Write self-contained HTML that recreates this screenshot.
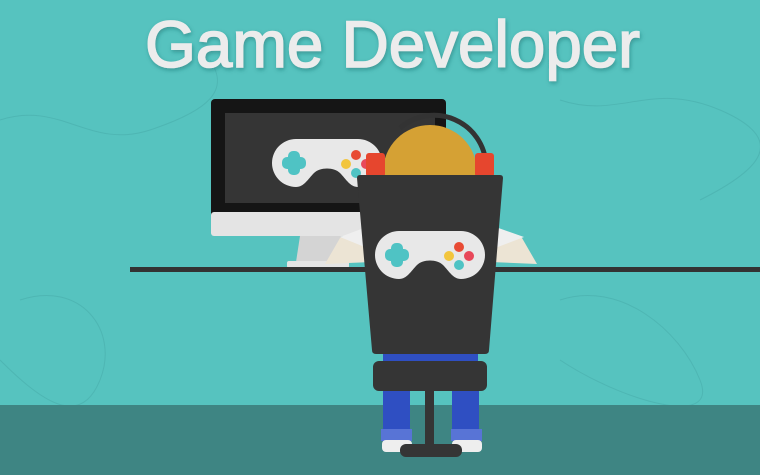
<!DOCTYPE html>
<html><head><meta charset="utf-8"><style>
html,body{margin:0;padding:0;width:760px;height:475px;overflow:hidden;background:#56c3bf}
svg{display:block}
</style></head><body>
<svg width="760" height="475" viewBox="0 0 760 475" xmlns="http://www.w3.org/2000/svg">
<defs>
<g id="pad">
<path d="M24,0 H86 A24,24 0 0 1 86,48 C78,48 74,40 68,34 C62,28 48,28 42,34 C36,40 32,48 24,48 A24,24 0 0 1 24,0 Z" fill="#e8e8e8"/>
<rect x="16" y="12" width="12" height="24" rx="5" fill="#4fc3c4"/>
<rect x="10" y="18" width="24" height="12" rx="5" fill="#4fc3c4"/>
<circle cx="74" cy="25" r="5" fill="#f2c53d"/>
<circle cx="84" cy="16" r="5" fill="#e84b34"/>
<circle cx="94" cy="25" r="5" fill="#e8485a"/>
<circle cx="84" cy="34" r="5" fill="#4fc3c4"/>
</g>
<filter id="sh" x="-5%" y="-20%" width="110%" height="140%"><feDropShadow dx="1" dy="2" stdDeviation="2" flood-color="#1f5f5d" flood-opacity="0.45"/></filter>
</defs>
<rect width="760" height="475" fill="#56c3bf"/>
<g fill="none" stroke="#4aaeab" stroke-width="1" opacity="0.6">
<path d="M0,120 C60,100 90,150 150,130 S230,90 210,60"/>
<path d="M560,100 C620,120 650,80 720,110 S760,170 700,200"/>
<path d="M20,300 C80,280 120,330 100,380 S40,400 0,360"/>
<path d="M560,300 C620,280 680,330 700,380 S620,400 560,360"/>
</g>
<text x="145" y="67" font-family="Liberation Sans, sans-serif" font-size="66" fill="#ececec" stroke="#ececec" stroke-width="1.6" textLength="495" lengthAdjust="spacingAndGlyphs" filter="url(#sh)">Game Developer</text>
<!-- floor -->
<rect x="0" y="405" width="760" height="70" fill="#3e8583"/>
<!-- monitor -->
<rect x="211" y="99" width="235" height="120" rx="4" fill="#151515"/>
<rect x="211" y="212" width="235" height="24" rx="3" fill="#e4e4e4"/>
<rect x="225" y="113" width="210" height="90" fill="#353535"/>
<path d="M300,236 H342 L346,262 H296 Z" fill="#d4d4d4"/>
<rect x="287" y="261" width="62" height="7" rx="2" fill="#e4e4e4"/>
<use href="#pad" x="272" y="139"/>
<!-- desk -->
<rect x="130" y="267" width="630" height="5" fill="#333"/>
<!-- arms -->
<path d="M340,238 L372,228 L372,262 L325,264 Z" fill="#ece4d4"/>
<path d="M340,237 L372,225 L372,250 Z" fill="#efefef"/>
<path d="M490,228 L522,238 L537,264 L490,262 Z" fill="#ece4d4"/>
<path d="M490,225 L524,237 L490,250 Z" fill="#efefef"/>
<!-- headphone band -->
<path d="M400,128 A52,52 0 0 1 486,165" fill="none" stroke="#333" stroke-width="5"/>
<!-- head -->
<circle cx="430" cy="172" r="47" fill="#d5a134"/>
<rect x="366" y="153" width="19" height="24" rx="3" fill="#e6462e"/>
<rect x="475" y="153" width="19" height="24" rx="3" fill="#e6462e"/>
<!-- pants top -->
<rect x="383" y="345" width="95" height="20" fill="#2f4fc2"/>
<!-- legs -->
<rect x="383" y="385" width="27" height="50" fill="#2f4fc2"/>
<rect x="452" y="385" width="27" height="50" fill="#2f4fc2"/>
<rect x="381" y="429" width="31" height="12" fill="#5874d6"/>
<rect x="451" y="429" width="31" height="12" fill="#5874d6"/>
<rect x="382" y="440" width="30" height="12" rx="4" fill="#eeeeee"/>
<rect x="452" y="440" width="30" height="12" rx="4" fill="#eeeeee"/>
<!-- chair back -->
<path d="M360,175 H500 Q503,175 503,178 L489,350 Q489,354 485,354 H376 Q372,354 372,350 L357,178 Q357,175 360,175 Z" fill="#353535"/>
<use href="#pad" x="375" y="231"/>
<!-- seat -->
<rect x="373" y="361" width="114" height="30" rx="6" fill="#353535"/>
<rect x="425" y="390" width="9" height="56" fill="#353535"/>
<rect x="400" y="444" width="62" height="13" rx="6" fill="#353535"/>
</svg>
</body></html>
